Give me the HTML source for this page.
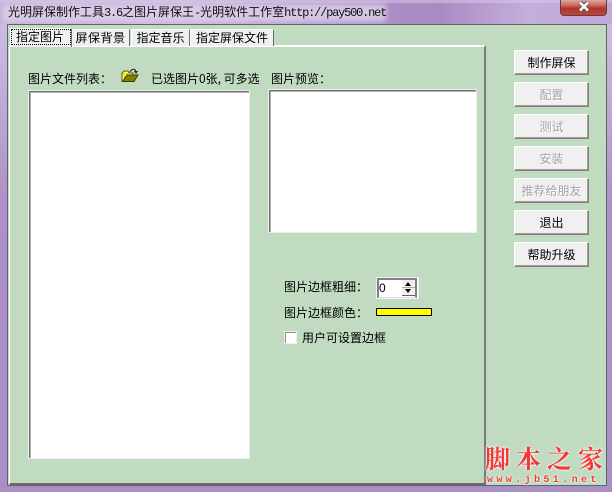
<!DOCTYPE html>
<html><head><meta charset="utf-8"><style>
*{box-sizing:border-box}
html,body{margin:0;padding:0}
body{width:612px;height:492px;overflow:hidden;position:relative;background:linear-gradient(#cbb9e0 0,#cbb9e0 40px,#ad91c8 200px,#a98fc6 100%);font:12px/14px "WenQuanYi Zen Hei","Noto Sans CJK SC",sans-serif;color:#000}
div{position:absolute}
.t{white-space:nowrap}
.btn{left:514px;width:75px;height:25px;background:#f0f0f0;border:1px solid;border-color:#fff #7d7d7d #7d7d7d #fff;box-shadow:inset -1px -1px 0 #a0a0a0;text-align:center;line-height:23px;font-size:12px}
.dis{color:#a3a3a3;text-shadow:1px 1px 0 #fff}
.tab{top:29px;height:17px;background:#f0f0f0;border:1px solid;border-color:#fff #6e6e6e transparent #fff;border-bottom:0;text-align:center;line-height:15px}
.sunk{background:#fff;border:1px solid #eee;box-shadow:inset 1px 1px 0 #6e6e6e,inset 2px 2px 0 #b0b0b0}
.m{font:12px/15px "Liberation Mono",monospace;letter-spacing:-1.200px}
</style></head><body>
<div style="left:0;top:0;width:612px;height:24px;background:linear-gradient(90deg,#c4afdb 0,#c7b3dc 30%,#ab8ec5 62%,#a98bc3 72%,#c4aedb 86%,#c0a8d8 100%)"></div>
<div style="left:0;top:0;width:612px;height:3px;background:#d9cbe8;opacity:.5"></div>
<div style="left:2px;top:4px;width:384px;height:18px;background:#dcd0e9;filter:blur(3px);opacity:.85"></div>
<div class="t" style="left:8px;top:4px;font-size:12px;line-height:15px;color:#111">光明屏保制作工具<span class="m">3.6</span>之图片屏保王<span class="m">-</span>光明软件工作室<span class="m">http://pay500.net</span></div>
<div style="left:560px;top:0;width:47px;height:16px;background:linear-gradient(#d9a79f,#cf6a5f 35%,#b0352c 55%,#b8473c);border:1px solid #6e3a3f;border-top:0;border-radius:0 0 4px 4px"></div>
<svg style="position:absolute;left:577px;top:1px" width="14" height="11" viewBox="0 0 14 11"><path d="M3 1.500L7 4.500L11 1.500M3 9.500L7 6.500L11 9.500M3 1.500L11 9.500M11 1.500L3 9.500" fill="none" stroke="#59616c" stroke-width="4"/><path d="M3 1.500L11 9.500M11 1.500L3 9.500" fill="none" stroke="#fff" stroke-width="2.400"/></svg>

<div style="left:7px;top:24px;width:600px;height:462px;background:#c1dbc1;border:1px solid #5f6268"></div>
<div style="left:9px;top:45px;width:477px;height:440px;border-style:solid;border-color:#fff #7a7a7a #6a6a6a #fff;border-width:2px 2px 2px 1px"></div>
<div class="tab t" style="left:71px;width:59px;letter-spacing:.5px">屏保背景</div>
<div class="tab t" style="left:131px;width:59px">指定音乐</div>
<div class="tab t" style="left:190px;width:84px">指定屏保文件</div>
<div class="tab" style="left:10px;top:28px;height:19px;width:62px"></div>
<div style="left:11px;top:29px;width:60px;height:16px;border:1px dotted #000"></div>
<div class="t" style="left:16px;top:30px">指定图片</div>

<div class="t" style="left:28px;top:72px">图片文件列表：</div>
<svg style="position:absolute;left:121px;top:68px" width="18" height="15" viewBox="0 0 18 15"><path d="M1 13V5l2-2h4l1 2h4v2L5 13z" fill="#ffff60" stroke="#5a5a00"/><path d="M2 5h2v2H2zM5 5h2v2H5zM3 8h2v2H3z" fill="#d8d800"/><path d="M1.500 13.500L6 7h11l-4 6.500z" fill="#808000" stroke="#3f3f00"/><path d="M9 4Q11 .5 14 1.500L15 4" fill="none" stroke="#222"/><path d="M13 3h4l-2 3z" fill="#222"/></svg>
<div class="t" style="left:151px;top:72px">已选图片0张, 可多选</div>
<div class="t" style="left:271px;top:72px">图片预览：</div>

<div class="sunk" style="left:28px;top:90px;width:222px;height:369px"></div>
<div class="sunk" style="left:268px;top:89px;width:209px;height:144px"></div>

<div class="t" style="left:284px;top:280px">图片边框粗细：</div>
<div style="left:376px;top:277px;width:43px;height:22px;background:#fff;border:1px solid #f0f0f0"></div>
<div style="left:377px;top:278px;width:40px;height:20px;background:#fff;border:2px solid #808080;border-bottom:1px solid #ddd"></div>
<div class="t" style="left:379px;top:281px;font:12px/14px 'Liberation Sans',sans-serif">0</div>
<div style="left:402px;top:280px;width:13px;height:8px;background:#f0f0f0;border-bottom:1px solid #aaa"><div style="left:3px;top:2px;width:0;height:0;border:3.500px solid transparent;border-top:0;border-bottom:4px solid #000"></div></div>
<div style="left:402px;top:288px;width:13px;height:8px;background:#f0f0f0;border-bottom:1px solid #666"><div style="left:3px;top:1px;width:0;height:0;border:3.500px solid transparent;border-bottom:0;border-top:4px solid #000"></div></div>

<div class="t" style="left:284px;top:306px">图片边框颜色：</div>
<div style="left:376px;top:308px;width:56px;height:8px;background:#ff0;border:1px solid #000"></div>
<div class="sunk" style="left:284px;top:331px;width:13px;height:13px;box-shadow:inset 1px 1px 0 #909090"></div>
<div class="t" style="left:302px;top:331px">用户可设置边框</div>

<div class="btn" style="top:50px">制作屏保</div>
<div class="btn dis" style="top:82px">配置</div>
<div class="btn dis" style="top:114px">测试</div>
<div class="btn dis" style="top:146px">安装</div>
<div class="btn dis" style="top:178px">推荐给朋友</div>
<div class="btn" style="top:210px">退出</div>
<div class="btn" style="top:242px">帮助升级</div>

<div class="t" style="left:485px;top:443px;font:bold 25px/30px 'Noto Serif CJK SC',serif;color:#f23838;letter-spacing:6px;text-shadow:0 0 2px #fff,0 0 2px #fff">脚本之家</div>
<div class="t" style="left:487px;top:476px;font:bold 10px/10px 'Liberation Mono',monospace;color:#f23838;letter-spacing:3.400px;text-shadow:0 0 2px #fff,0 0 2px #fff">www.jb51.net</div>
</body></html>
